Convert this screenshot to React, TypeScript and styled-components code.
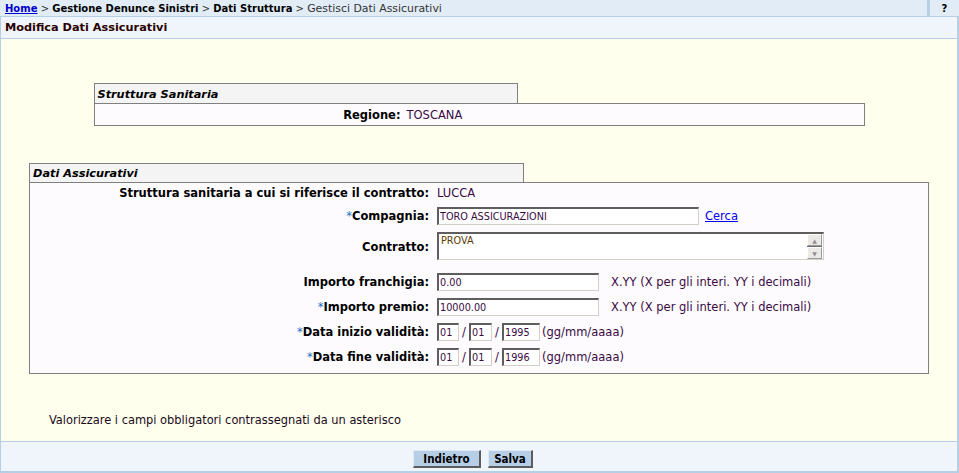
import React from 'react';
import styled, { createGlobalStyle } from 'styled-components';

const frameBlue = '#b5cfe6';
const valueText = '#3a0a44';

const GlobalStyle = createGlobalStyle`
  html, body, #root {
    margin: 0;
    padding: 0;
    height: 100%;
  }
  body {
    font-family: 'DejaVu Sans', Verdana, sans-serif;
    font-size: 11.5px;
    color: #000;
    background: #fff;
  }
`;

const Page = styled.div`
  height: 100vh;
  display: flex;
  flex-direction: column;
  overflow: hidden;
`;

const Breadcrumb = styled.div`
  display: flex;
  height: 16px;
  background: #e1ecf6;
  border-bottom: 1px solid ${frameBlue};
`;

const Crumbs = styled.div`
  flex: 1;
  display: flex;
  align-items: center;
  padding-left: 5px;
  font-size: 10px;
  white-space: pre;
`;

const CrumbLink = styled.a`
  color: #0000cc;
  font-weight: bold;
  text-decoration: underline;
`;

const Crumb = styled.span<{ current?: boolean }>`
  font-weight: ${(p) => (p.current ? 'normal' : 'bold')};
  font-size: ${(p) => (p.current ? '10.9px' : '10px')};
  color: ${(p) => (p.current ? '#333' : '#000')};
`;

const Sep = styled.span`
  color: #333;
`;

const HelpCell = styled.div`
  width: 29px;
  border-left: 3px solid ${frameBlue};
  display: flex;
  align-items: center;
  justify-content: center;
  font-weight: bold;
  font-size: 10px;
`;

const Frame = styled.div`
  flex: 1;
  display: flex;
  flex-direction: column;
  border-left: 1px solid ${frameBlue};
  border-right: 2px solid ${frameBlue};
  border-bottom: 2px solid ${frameBlue};
`;

const TitleBar = styled.div`
  height: 21px;
  display: flex;
  align-items: center;
  padding-left: 4px;
  background: #eff5fb;
  border-bottom: 1px solid ${frameBlue};
  font-weight: bold;
  font-size: 11.3px;
  color: #2a0000;
`;

const Main = styled.div`
  flex: 1;
  background: #ffffee;
  padding-top: 44px;
  display: flex;
  flex-direction: column;
`;

const Section = styled.div<{ width: number; gapTop?: number }>`
  width: ${(p) => p.width}px;
  margin: ${(p) => p.gapTop ?? 0}px auto 0;
`;

const SectionHead = styled.div<{ height: number }>`
  width: 55%;
  height: ${(p) => p.height}px;
  box-sizing: border-box;
  display: flex;
  align-items: center;
  padding: 1px 0 0 3px;
  background: #f4f4f4;
  border: 1px solid #808080;
  border-bottom: none;
  font-weight: bold;
  font-style: italic;
  font-size: 11.3px;
`;

const SectionBody = styled.div<{ label: number; gap: number }>`
  background: #fdfbfd;
  border: 1px solid #808080;
  display: grid;
  grid-template-columns: ${(p) => p.label}px 1fr;
  column-gap: ${(p) => p.gap}px;
  row-gap: 7px;
  align-items: center;
`;

const RegioneBody = styled(SectionBody)`
  height: 21px;
`;

const FormBody = styled(SectionBody)`
  padding: 2px 0 7px;
`;

const Label = styled.div<{ tall?: boolean }>`
  text-align: right;
  font-weight: bold;
  white-space: nowrap;
  align-self: ${(p) => (p.tall ? 'start' : 'center')};
  padding-top: ${(p) => (p.tall ? '8px' : '0')};
`;

const Star = styled.span`
  color: #1e6fc8;
  font-weight: normal;
`;

const Value = styled.div`
  color: ${valueText};
  display: flex;
  align-items: center;
  white-space: nowrap;
  min-height: 15px;
`;

const TextInput = styled.input<{ w: number }>`
  width: ${(p) => p.w}px;
  height: 18px;
  box-sizing: border-box;
  margin: 0;
  padding: 0 0 0 1px;
  border-style: solid;
  border-width: 2px 1px 1px 2px;
  border-color: #5e5e5e #d4d0c8 #d4d0c8 #5e5e5e;
  background: #fff;
  font-family: 'DejaVu Sans', Verdana, sans-serif;
  font-size: 9.7px;
  color: ${valueText};
  outline: none;
`;

const AreaBox = styled.div`
  width: 387px;
  height: 28px;
  box-sizing: border-box;
  display: flex;
  border-style: solid;
  border-width: 2px 1px 1px 2px;
  border-color: #5e5e5e #d4d0c8 #d4d0c8 #5e5e5e;
  background: #fff;
  margin-bottom: 6px;
`;

const Area = styled.textarea`
  flex: 1;
  border: none;
  resize: none;
  overflow: hidden;
  padding: 1px 2px;
  margin: 0;
  font-family: 'DejaVu Sans', Verdana, sans-serif;
  font-size: 9.7px;
  color: #5a3a00;
  outline: none;
`;

const ScrollCol = styled.div`
  width: 15px;
  display: flex;
  flex-direction: column;
  gap: 1px;
  background: #6e6e6e;
  margin: 0 1px 0 0;
`;

const ScrollBtn = styled.div`
  flex: 1;
  background: #ebe9e6;
  border: 1px solid #fff;
  border-right-color: #9a9a9a;
  border-bottom-color: #9a9a9a;
  display: flex;
  align-items: center;
  justify-content: center;
  font-size: 6px;
  color: #909090;
`;

const Link = styled.a`
  color: #0000ee;
  text-decoration: underline;
  margin-left: 6px;
  font-size: 11.5px;
`;

const Hint = styled.span`
  margin-left: 12px;
  color: ${valueText};
`;

const Slash = styled.span`
  width: 10px;
  text-align: center;
  color: ${valueText};
`;

const DateFormat = styled.span`
  margin-left: 2px;
  color: ${valueText};
`;

const Note = styled.div`
  margin: 38px 0 0 48px;
  font-family: 'DejaVu Sans Condensed', 'DejaVu Sans', sans-serif;
  font-stretch: condensed;
  font-size: 12.7px;
  color: #1a0a1a;
`;

const Footer = styled.div`
  height: 30px;
  background: #eff5fb;
  border-top: 1px solid ${frameBlue};
  display: flex;
  justify-content: center;
  align-items: flex-start;
  gap: 7px;
  padding: 8px 12px 0 0;
  box-sizing: border-box;
`;

const Button = styled.button<{ w: number }>`
  width: ${(p) => p.w}px;
  height: 18px;
  box-sizing: border-box;
  margin: 0;
  padding: 0;
  background: #b6cfe7;
  border-style: solid;
  border-width: 1px 2px 2px 1px;
  border-color: #dfeaf5 #5c5c5c #5c5c5c #dfeaf5;
  font-family: 'DejaVu Sans Condensed', 'DejaVu Sans', sans-serif;
  font-stretch: condensed;
  font-weight: bold;
  font-size: 11.5px;
  color: #000;
`;

const DateField: React.FC<{ d: string; m: string; y: string }> = ({ d, m, y }) => (
  <Value>
    <TextInput w={22} defaultValue={d} />
    <Slash>/</Slash>
    <TextInput w={23} defaultValue={m} />
    <Slash>/</Slash>
    <TextInput w={38} defaultValue={y} />
    <DateFormat>(gg/mm/aaaa)</DateFormat>
  </Value>
);

const App: React.FC = (): JSX.Element => (
  <Page>
    <GlobalStyle />
    <Breadcrumb>
      <Crumbs>
        <CrumbLink href="#">Home</CrumbLink>
        <Sep> &gt; </Sep>
        <Crumb>Gestione Denunce Sinistri</Crumb>
        <Sep> &gt; </Sep>
        <Crumb>Dati Struttura</Crumb>
        <Sep> &gt; </Sep>
        <Crumb current>Gestisci Dati Assicurativi</Crumb>
      </Crumbs>
      <HelpCell>?</HelpCell>
    </Breadcrumb>
    <Frame>
      <TitleBar>Modifica Dati Assicurativi</TitleBar>
      <Main>
        <Section width={771}>
          <SectionHead height={20}>Struttura Sanitaria</SectionHead>
          <RegioneBody label={306} gap={6}>
            <Label>Regione:</Label>
            <Value>TOSCANA</Value>
          </RegioneBody>
        </Section>

        <Section width={900} gapTop={37}>
          <SectionHead height={19}>Dati Assicurativi</SectionHead>
          <FormBody label={399} gap={8}>
            <Label>Struttura sanitaria a cui si riferisce il contratto:</Label>
            <Value>LUCCA</Value>

            <Label>
              <Star>*</Star>Compagnia:
            </Label>
            <Value>
              <TextInput w={262} defaultValue="TORO ASSICURAZIONI" />
              <Link href="#">Cerca</Link>
            </Value>

            <Label tall>Contratto:</Label>
            <Value>
              <AreaBox>
                <Area defaultValue="PROVA" />
                <ScrollCol>
                  <ScrollBtn>▲</ScrollBtn>
                  <ScrollBtn>▼</ScrollBtn>
                </ScrollCol>
              </AreaBox>
            </Value>

            <Label>Importo franchigia:</Label>
            <Value>
              <TextInput w={162} defaultValue="0.00" />
              <Hint>X.YY (X per gli interi. YY i decimali)</Hint>
            </Value>

            <Label>
              <Star>*</Star>Importo premio:
            </Label>
            <Value>
              <TextInput w={162} defaultValue="10000.00" />
              <Hint>X.YY (X per gli interi. YY i decimali)</Hint>
            </Value>

            <Label>
              <Star>*</Star>Data inizio validità:
            </Label>
            <DateField d="01" m="01" y="1995" />

            <Label>
              <Star>*</Star>Data fine validità:
            </Label>
            <DateField d="01" m="01" y="1996" />
          </FormBody>
        </Section>

        <Note>Valorizzare i campi obbligatori contrassegnati da un asterisco</Note>
      </Main>
      <Footer>
        <Button w={68}>Indietro</Button>
        <Button w={45}>Salva</Button>
      </Footer>
    </Frame>
  </Page>
);

export default App;
